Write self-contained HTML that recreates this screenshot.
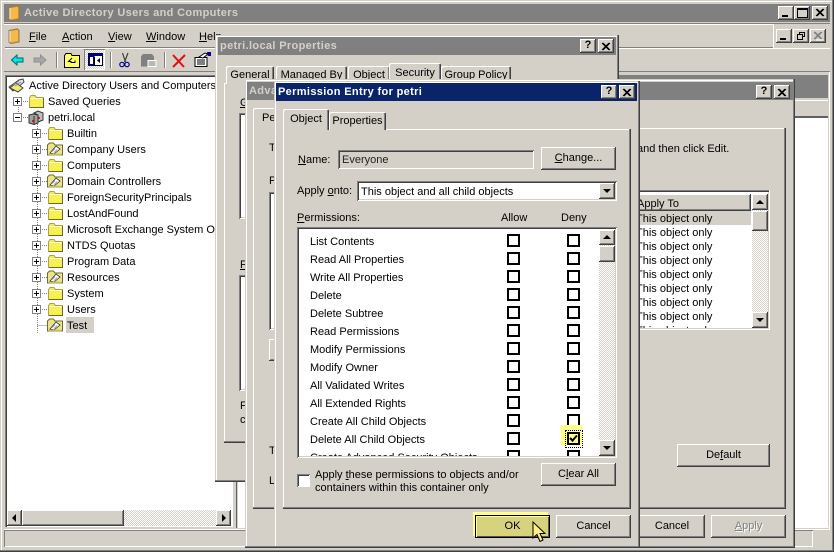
<!DOCTYPE html>
<html><head><meta charset="utf-8"><style>
html,body{margin:0;padding:0}
body{width:834px;height:552px;overflow:hidden;position:relative;background:#d4d0c8;font:11px "Liberation Sans",Arial,sans-serif;letter-spacing:0;color:#000}
div,span.t,svg{position:absolute}
.t{position:absolute;white-space:nowrap;line-height:14px;height:14px;margin-top:1px}
.b{background:#d4d0c8;box-shadow:inset -1px -1px #404040,inset 1px 1px #fff,inset -2px -2px #808080}
.s{background:#fff;box-shadow:inset 1px 1px #808080,inset -1px -1px #fff,inset 2px 2px #404040,inset -2px -2px #d4d0c8}
.w{background:#d4d0c8;box-shadow:inset -1px -1px #404040,inset -2px -2px #808080,inset 1px 1px #d4d0c8,inset 2px 2px #fff}
.p{background:#d4d0c8;box-shadow:inset -1px -1px #404040,inset -2px -2px #808080,inset 1px 1px #fff}
.tb{background:#808080;color:#d4d0c8;font-weight:bold;font-size:11px;letter-spacing:.35px;line-height:18px;white-space:nowrap;padding-left:2px;box-sizing:border-box;overflow:hidden}
.tab{background:#d4d0c8;box-shadow:inset 1px 1px #fff,inset -1px 0 #404040,inset -2px 0 #808080;border-radius:2px 2px 0 0;text-align:center;line-height:19px;white-space:nowrap}
.bt{text-align:center;white-space:nowrap}
.d{background:repeating-conic-gradient(#fff 0 25%,#d4d0c8 0 50%) 0 0/2px 2px}
.cb{width:9px;height:9px;border:2px solid #000;background:#fff}
.c{font-weight:bold;font-size:11px;line-height:13px;text-align:center;letter-spacing:0}
</style></head><body>
<svg width="0" height="0" style="left:0;top:0"><defs>
<symbol id="f" viewBox="0 0 15 13"><path d="M.5 12.500V2.500L2 .5h4l1.500 2h7v10z" fill="#f4e860" stroke="#b0a040"/><path d="M1.500 3.500h12v8h-12z" fill="#f8f050"/><path d="M1.500 3.500h12" stroke="#fffff0"/><path d="M14.500 3v10M1 12.500h13.500" stroke="#6b6a30"/></symbol>
<symbol id="o" viewBox="0 0 16 14"><path d="M.5 13V3l2-2h4l1.500 2h7.500v10z" fill="#ebe48c" stroke="#6d6a2e"/><path d="M3 11 9 4l4 3-6 5z" fill="#fff" stroke="#333" stroke-width=".8"/><path d="M5 9.500l3-3M7 10.500l3-3" stroke="#777" stroke-width=".7"/><path d="M1.500 12.500h13" stroke="#c8bf50" stroke-width="1.500"/></symbol>
<symbol id="m" viewBox="0 0 9 9"><path d="M.5.5h8v8h-8z" fill="#fff" stroke="#808080"/><path d="M2 4.500h5M4.500 2v5" stroke="#000"/></symbol>
<symbol id="n" viewBox="0 0 9 9"><path d="M.5.5h8v8h-8z" fill="#fff" stroke="#808080"/><path d="M2 4.500h5" stroke="#000"/></symbol>
<symbol id="bk" viewBox="0 0 12 16"><path d="M1 2.500 9 .8l2 1.500V14l-8 1.500-2-1.500z" fill="#e8a030" stroke="#9a7a40"/><path d="M3 3.500 10 2v11l-7 1.500z" fill="#f5b94a"/><path d="M2 3v11" stroke="#fff"/></symbol>
</defs></svg>

<!-- MAIN WINDOW -->
<div class="w" style="left:0;top:0;width:834px;height:552px"></div>
<div class="tb" style="left:4px;top:4px;width:826px;height:18px;padding-left:20px">Active Directory Users and Computers</div>
<svg style="left:8px;top:5px" width="12" height="16"><use href="#bk"/></svg>
<div class="b" style="left:778px;top:6px;width:16px;height:14px"></div><div style="left:782px;top:15px;width:6px;height:2px;background:#000"></div>
<div class="b" style="left:794px;top:6px;width:16px;height:14px"></div><div style="left:797px;top:8px;width:9px;height:7px;border:1px solid #000;border-top-width:2px"></div>
<div class="b" style="left:812px;top:6px;width:16px;height:14px"></div>
<svg style="left:815px;top:8px" width="10" height="9"><path d="M1 1l7 7M2 1l7 7M8 1 1 8M9 1 2 8" stroke="#000"/></svg>

<div style="left:4px;top:23px;width:826px;height:1px;background:#808080"></div>
<div style="left:4px;top:24px;width:769px;height:1px;background:#fff"></div>
<div style="left:5px;top:47px;width:768px;height:1px;background:#808080"></div>
<div style="left:5px;top:48px;width:825px;height:1px;background:#fff"></div>
<div style="left:773px;top:24px;width:1px;height:24px;background:#fff"></div>
<div style="left:4px;top:71px;width:826px;height:1px;background:#808080"></div>
<svg style="left:8px;top:28px" width="12" height="16"><use href="#bk"/></svg>
<span class="t" style="left:29px;top:29px"><u>F</u>ile</span>
<span class="t" style="left:62px;top:29px"><u>A</u>ction</span>
<span class="t" style="left:108px;top:29px"><u>V</u>iew</span>
<span class="t" style="left:146px;top:29px"><u>W</u>indow</span>
<span class="t" style="left:199px;top:29px"><u>H</u>elp</span>
<div class="b" style="left:776px;top:29px;width:16px;height:14px"></div><div style="left:780px;top:38px;width:6px;height:2px;background:#000"></div>
<div class="b" style="left:793px;top:29px;width:16px;height:14px"></div>
<svg style="left:796px;top:31px" width="10" height="10"><path d="M3.500 3V1.500h5v4H7M1.500 3.500h5v5h-5z" fill="none" stroke="#000"/><path d="M3 1.500h6M1 3.500h6" stroke="#000"/></svg>
<div class="b" style="left:810px;top:29px;width:16px;height:14px"></div>
<svg style="left:813px;top:31px" width="11" height="10"><path d="M1 1l7 7M2 1l7 7M8 1 1 8M9 1 2 8" stroke="#808080"/><path d="M3 9l7-0" stroke="#fff"/></svg>

<!-- toolbar -->
<svg style="left:10px;top:52px" width="230" height="18">
<path d="M1.500 8 7 3v3h6v4H7v3z" fill="#00e8e8" stroke="#006868"/>
<path d="M36 8 30.500 3v3H24v4h6.500v3z" fill="#a8a8a8" stroke="#909090"/>
<path d="M46.500 0v16" stroke="#808080"/><path d="M47.500 0v16" stroke="#fff"/>
<path d="M54.500 15.500V3.500L56 1.500h5l1 2h7.500v12z" fill="#ffff66" stroke="#000"/>
<path d="M62 6 58.500 9.500H61v1h4V8.500" fill="none" stroke="#000"/>
<path d="M100.500 0v16" stroke="#808080"/><path d="M101.500 0v16" stroke="#fff"/>
<path d="M112.500 1l3 9M118 1l-3.500 9" stroke="#333" stroke-width="1.100"/>
<circle cx="112" cy="12.500" r="2.200" fill="none" stroke="#00009a" stroke-width="1.200"/><circle cx="117" cy="12.500" r="2.200" fill="none" stroke="#00009a" stroke-width="1.200"/>
<path d="M131 4.500l2-2.500h9l2 2.500v10h-13z" fill="#808080"/><path d="M138 8.500h8v6h-8z" fill="#b8b8b8" stroke="#fff"/>
<path d="M154.500 0v16" stroke="#808080"/><path d="M155.500 0v16" stroke="#fff"/>
<path d="M163 3l11 12M175 3 163 15" stroke="#e01010" stroke-width="2"/>
<path d="M185 5.500h12v9h-12z" fill="#fff" stroke="#000"/><path d="M187 8h8M187 10h8M187 12h8" stroke="#000"/><path d="M189 5l6-4 3 1-5 4z" fill="#fff" stroke="#000"/><path d="M197 0h4v4h-3z" fill="#000080"/>
</svg>
<div class="d" style="left:84px;top:49px;width:21px;height:21px;box-shadow:inset 1px 1px #808080,inset -1px -1px #fff"></div>
<svg style="left:88px;top:53px" width="15" height="13"><path d="M.5.500h14v12H.5z" fill="#fff" stroke="#000040"/><path d="M1 1h13v2H1z" fill="#000080"/><path d="M1 3h5v9H1z" fill="#000080"/><path d="M2 4h3v7H2z" fill="#fff"/><path d="M6 3.500h1v9H6z" fill="#000"/><path d="M12 5 9 7.500 12 10z" fill="#000"/></svg>

<!-- right pane behind -->
<div style="left:237px;top:75px;width:591px;height:23px;background:#808080"></div>
<div style="left:236px;top:100px;width:592px;height:1px;background:#fff"></div>
<div style="left:236px;top:116px;width:592px;height:2px;background:#606060"></div>
<div style="left:238px;top:118px;width:590px;height:409px;background:#fff"></div>
<div style="left:236px;top:100px;width:1px;height:428px;background:#606060"></div>
<div style="left:829px;top:72px;width:1px;height:457px;background:#fff"></div>
<div style="left:238px;top:527px;width:592px;height:1px;background:#fff"></div>

<!-- tree -->
<div style="left:5px;top:75px;width:228px;height:452px;background:#fff;box-shadow:inset 1px 1px #808080,inset 2px 2px #404040,inset -1px -1px #fff"></div>
<svg style="left:8px;top:78px" width="18" height="16"><path d="M1 9 11 2l4-1 1 3-8 7-3 2z" fill="#e8e8e8" stroke="#444"/><path d="M2 10l8 4 5-4-7-5z" fill="#f0ea70" stroke="#444"/><path d="M5 7l6-4M7 8l6-4" stroke="#888"/></svg>
<span class="t" style="left:29px;top:78px">Active Directory Users and Computers</span>
<svg style="left:14px;top:94px" width="90" height="240"><path d="M4.500 3v20M9 7.500h5M9 23.500h5M23.500 28v211M28 39.500h5M28 55.500h5M28 71.500h5M28 87.500h5M28 103.500h5M28 119.500h5M28 135.500h5M28 151.500h5M28 167.500h5M28 183.500h5M28 199.500h5M28 215.500h5M23.500 231.500h10" stroke="#808080" stroke-dasharray="1 1" fill="none"/></svg>
<svg style="left:13px;top:97px" width="9" height="9"><use href="#m"/></svg>
<svg style="left:13px;top:113px" width="9" height="9"><use href="#n"/></svg>
<svg style="left:29px;top:95px" width="15" height="13"><use href="#f"/></svg>
<span class="t" style="left:48px;top:94px">Saved Queries</span>
<svg style="left:28px;top:110px" width="16" height="15"><path d="M6 3l4-2 5 2v7l-5 2V5z" fill="#c0c0c0" stroke="#333"/><path d="M1 5l4-1 5 1v8l-4 1.500L1 13z" fill="#a0a0a0" stroke="#333"/><path d="M6 6v8" stroke="#333"/><circle cx="11" cy="8" r="1" fill="#c00"/><circle cx="5" cy="11" r="1" fill="#c00"/></svg>
<span class="t" style="left:48px;top:110px">petri.local</span>

<svg style="left:32px;top:129px" width="9" height="9"><use href="#m"/></svg><svg style="left:48px;top:127px" width="15" height="13"><use href="#f"/></svg><span class="t" style="left:67px;top:126px">Builtin</span>
<svg style="left:32px;top:145px" width="9" height="9"><use href="#m"/></svg><svg style="left:47px;top:142px" width="16" height="14"><use href="#o"/></svg><span class="t" style="left:67px;top:142px">Company Users</span>
<svg style="left:32px;top:161px" width="9" height="9"><use href="#m"/></svg><svg style="left:48px;top:159px" width="15" height="13"><use href="#f"/></svg><span class="t" style="left:67px;top:158px">Computers</span>
<svg style="left:32px;top:177px" width="9" height="9"><use href="#m"/></svg><svg style="left:47px;top:174px" width="16" height="14"><use href="#o"/></svg><span class="t" style="left:67px;top:174px">Domain Controllers</span>
<svg style="left:32px;top:193px" width="9" height="9"><use href="#m"/></svg><svg style="left:48px;top:191px" width="15" height="13"><use href="#f"/></svg><span class="t" style="left:67px;top:190px">ForeignSecurityPrincipals</span>
<svg style="left:32px;top:209px" width="9" height="9"><use href="#m"/></svg><svg style="left:48px;top:207px" width="15" height="13"><use href="#f"/></svg><span class="t" style="left:67px;top:206px">LostAndFound</span>
<svg style="left:32px;top:225px" width="9" height="9"><use href="#m"/></svg><svg style="left:48px;top:223px" width="15" height="13"><use href="#f"/></svg><span class="t" style="left:67px;top:222px;width:148px;overflow:hidden">Microsoft Exchange System Objects</span>
<svg style="left:32px;top:241px" width="9" height="9"><use href="#m"/></svg><svg style="left:48px;top:239px" width="15" height="13"><use href="#f"/></svg><span class="t" style="left:67px;top:238px">NTDS Quotas</span>
<svg style="left:32px;top:257px" width="9" height="9"><use href="#m"/></svg><svg style="left:48px;top:255px" width="15" height="13"><use href="#f"/></svg><span class="t" style="left:67px;top:254px">Program Data</span>
<svg style="left:32px;top:273px" width="9" height="9"><use href="#m"/></svg><svg style="left:47px;top:270px" width="16" height="14"><use href="#o"/></svg><span class="t" style="left:67px;top:270px">Resources</span>
<svg style="left:32px;top:289px" width="9" height="9"><use href="#m"/></svg><svg style="left:48px;top:287px" width="15" height="13"><use href="#f"/></svg><span class="t" style="left:67px;top:286px">System</span>
<svg style="left:32px;top:305px" width="9" height="9"><use href="#m"/></svg><svg style="left:48px;top:303px" width="15" height="13"><use href="#f"/></svg><span class="t" style="left:67px;top:302px">Users</span>
<div style="left:66px;top:317px;width:28px;height:16px;background:#d4d0c8"></div>
<svg style="left:47px;top:318px" width="16" height="14"><use href="#o"/></svg><span class="t" style="left:67px;top:318px">Test</span>
<!-- tree scrollbar -->
<div class="d" style="left:7px;top:510px;width:224px;height:16px"></div>
<div class="b" style="left:7px;top:510px;width:15px;height:16px"></div><svg style="left:11px;top:514px" width="6" height="8"><path d="M5 0v8L1 4z"/></svg>
<div class="b" style="left:22px;top:510px;width:102px;height:16px"></div>
<div class="b" style="left:216px;top:510px;width:15px;height:16px"></div><svg style="left:221px;top:514px" width="6" height="8"><path d="M1 0v8l4-4z"/></svg>
<!-- status -->
<div style="left:4px;top:530px;width:809px;height:17px;box-shadow:inset 1px 1px #808080,inset -1px -1px #fff"></div>
<div style="left:4px;top:529px;width:826px;height:1px;background:#fff"></div>

<!-- DIALOG 1 -->
<div class="w" style="left:215px;top:35px;width:404px;height:447px"></div>
<div class="tb" style="left:218px;top:37px;width:398px;height:18px">petri.local Properties</div>
<div class="b" style="left:580px;top:39px;width:16px;height:14px"></div><div class="c" style="left:580px;top:39px;width:16px;height:14px">?</div>
<div class="b" style="left:598px;top:39px;width:16px;height:14px"></div><svg style="left:601px;top:42px" width="10" height="9"><path d="M1 1l7 7M2 1l7 7M8 1 1 8M9 1 2 8" stroke="#000"/></svg>
<div class="p" style="left:224px;top:83px;width:386px;height:360px"></div>
<div class="tab" style="left:226px;top:66px;width:48px;height:18px">General</div>
<div class="tab" style="left:276px;top:66px;width:71px;height:18px">Managed By</div>
<div class="tab" style="left:348px;top:66px;width:42px;height:18px">Object</div>
<div class="tab" style="left:389px;top:63px;width:52px;height:21px;line-height:21px">Security</div>
<div class="tab" style="left:441px;top:66px;width:70px;height:18px">Group Policy</div>
<span class="t" style="left:240px;top:95px"><u>G</u></span>
<div class="s" style="left:239px;top:113px;width:60px;height:106px"></div>
<span class="t" style="left:240px;top:257px"><u>F</u></span>
<div class="s" style="left:239px;top:275px;width:60px;height:116px"></div>
<span class="t" style="left:240px;top:398px">F</span>
<span class="t" style="left:240px;top:412px">c</span>

<!-- DIALOG 2 -->
<div class="w" style="left:245px;top:79px;width:550px;height:469px"></div>
<div class="tb" style="left:247px;top:82px;width:546px;height:18px">Advanced Security Settings for petri</div>
<div class="b" style="left:756px;top:85px;width:16px;height:14px"></div><div class="c" style="left:756px;top:85px;width:16px;height:14px">?</div>
<div class="b" style="left:774px;top:85px;width:16px;height:14px"></div><svg style="left:777px;top:88px" width="10" height="9"><path d="M1 1l7 7M2 1l7 7M8 1 1 8M9 1 2 8" stroke="#000"/></svg>
<div class="p" style="left:253px;top:128px;width:533px;height:381px"></div>
<div class="tab" style="left:253px;top:108px;width:60px;height:21px;line-height:21px;text-align:left;text-indent:9px">Permissions</div>
<span class="t" style="left:269px;top:140px">T</span>
<span class="t" style="left:269px;top:173px">F</span>
<div class="s" style="left:269px;top:192px;width:60px;height:138px"></div>
<div class="b" style="left:269px;top:339px;width:60px;height:22px"></div>
<span class="t" style="left:269px;top:443px">T</span>
<span class="t" style="left:269px;top:473px">L</span>
<span class="t" style="left:637px;top:141px">and then click Edit.</span>
<!-- adv list -->
<div style="left:630px;top:190px;width:140px;height:140px;background:#fff;box-shadow:inset -1px -1px #fff,inset 1px 1px #808080,inset 2px 2px #404040,inset -2px -2px #d4d0c8"></div>
<div class="b" style="left:630px;top:194px;width:121px;height:17px"></div>
<span class="t" style="left:637px;top:196px">Apply To</span>
<div style="left:630px;top:211px;width:121px;height:14px;background:#d4d0c8"></div>
<div style="left:630px;top:211px;width:121px;height:117px;overflow:hidden">
<span class="t" style="left:6px;top:0">This object only</span>
<span class="t" style="left:6px;top:14px">This object only</span>
<span class="t" style="left:6px;top:28px">This object only</span>
<span class="t" style="left:6px;top:42px">This object only</span>
<span class="t" style="left:6px;top:56px">This object only</span>
<span class="t" style="left:6px;top:70px">This object only</span>
<span class="t" style="left:6px;top:84px">This object only</span>
<span class="t" style="left:6px;top:98px">This object only</span>
<span class="t" style="left:6px;top:112px">This object only</span>
</div>
<div class="d" style="left:752px;top:194px;width:16px;height:134px"></div>
<div class="b" style="left:752px;top:194px;width:16px;height:16px"></div><svg style="left:756px;top:200px" width="8" height="5"><path d="M4 0 8 4H0z"/></svg>
<div class="b" style="left:752px;top:211px;width:16px;height:20px"></div>
<div class="b" style="left:752px;top:312px;width:16px;height:16px"></div><svg style="left:756px;top:318px" width="8" height="5"><path d="M0 0h8L4 4z"/></svg>
<div class="b bt" style="left:677px;top:444px;width:93px;height:23px;line-height:22px">De<u>f</u>ault</div>
<div class="b bt" style="left:639px;top:515px;width:66px;height:23px;line-height:22px">Cancel</div>
<div class="b bt" style="left:711px;top:515px;width:75px;height:23px;line-height:22px;color:#808080;text-shadow:1px 1px #fff"><u>A</u>pply</div>

<!-- DIALOG 3 -->
<div class="w" style="left:274px;top:81px;width:366px;height:467px"></div>
<div class="tb" style="left:276px;top:83px;width:361px;height:18px;background:#0a246a;color:#fff">Permission Entry for petri</div>
<div class="b" style="left:601px;top:85px;width:16px;height:14px"></div><div class="c" style="left:601px;top:85px;width:16px;height:14px">?</div>
<div class="b" style="left:619px;top:85px;width:16px;height:14px"></div><svg style="left:622px;top:88px" width="10" height="9"><path d="M1 1l7 7M2 1l7 7M8 1 1 8M9 1 2 8" stroke="#000"/></svg>
<div class="p" style="left:283px;top:129px;width:348px;height:380px"></div>
<div class="tab" style="left:329px;top:112px;width:57px;height:18px;line-height:19px">Properties</div>
<div class="tab" style="left:283px;top:109px;width:46px;height:21px;line-height:21px">Object</div>

<span class="t" style="left:298px;top:152px"><u>N</u>ame:</span>
<div style="left:338px;top:150px;width:196px;height:19px;background:#d4d0c8;box-shadow:inset 1px 1px #808080,inset -1px -1px #fff,inset 2px 2px #404040"></div>
<span class="t" style="left:342px;top:152px;color:#222">Everyone</span>
<div class="b bt" style="left:541px;top:147px;width:75px;height:23px;line-height:22px"><u>C</u>hange...</div>

<span class="t" style="left:297px;top:183px">Apply <u>o</u>nto:</span>
<div class="s" style="left:357px;top:181px;width:260px;height:20px"></div>
<span class="t" style="left:361px;top:184px">This object and all child objects</span>
<div class="b" style="left:599px;top:183px;width:16px;height:16px"></div><svg style="left:603px;top:189px" width="8" height="5"><path d="M0 0h8L4 4z"/></svg>

<span class="t" style="left:297px;top:210px"><u>P</u>ermissions:</span>
<span class="t" style="left:501px;top:210px">Allow</span>
<span class="t" style="left:561px;top:210px">Deny</span>

<div class="s" style="left:297px;top:227px;width:320px;height:231px"></div>
<div style="left:299px;top:229px;width:300px;height:227px;overflow:hidden;background:#fff">
<span class="t" style="left:11px;top:5px">List Contents</span>
<span class="t" style="left:11px;top:23px">Read All Properties</span>
<span class="t" style="left:11px;top:41px">Write All Properties</span>
<span class="t" style="left:11px;top:59px">Delete</span>
<span class="t" style="left:11px;top:77px">Delete Subtree</span>
<span class="t" style="left:11px;top:95px">Read Permissions</span>
<span class="t" style="left:11px;top:113px">Modify Permissions</span>
<span class="t" style="left:11px;top:131px">Modify Owner</span>
<span class="t" style="left:11px;top:149px">All Validated Writes</span>
<span class="t" style="left:11px;top:167px">All Extended Rights</span>
<span class="t" style="left:11px;top:185px">Create All Child Objects</span>
<span class="t" style="left:11px;top:203px">Delete All Child Objects</span>
<span class="t" style="left:11px;top:221px">Create Advanced Security Objects</span>
<div class="cb" style="left:208px;top:5px"></div><div class="cb" style="left:268px;top:5px"></div>
<div class="cb" style="left:208px;top:23px"></div><div class="cb" style="left:268px;top:23px"></div>
<div class="cb" style="left:208px;top:41px"></div><div class="cb" style="left:268px;top:41px"></div>
<div class="cb" style="left:208px;top:59px"></div><div class="cb" style="left:268px;top:59px"></div>
<div class="cb" style="left:208px;top:77px"></div><div class="cb" style="left:268px;top:77px"></div>
<div class="cb" style="left:208px;top:95px"></div><div class="cb" style="left:268px;top:95px"></div>
<div class="cb" style="left:208px;top:113px"></div><div class="cb" style="left:268px;top:113px"></div>
<div class="cb" style="left:208px;top:131px"></div><div class="cb" style="left:268px;top:131px"></div>
<div class="cb" style="left:208px;top:149px"></div><div class="cb" style="left:268px;top:149px"></div>
<div class="cb" style="left:208px;top:167px"></div><div class="cb" style="left:268px;top:167px"></div>
<div class="cb" style="left:208px;top:185px"></div><div class="cb" style="left:268px;top:185px"></div>
<div class="cb" style="left:208px;top:203px"></div>
<div style="left:262px;top:196px;width:21px;height:20px;background:#ffff80"></div>
<div style="left:266px;top:201px;width:16px;height:16px;border:1px dotted #000"></div>
<div class="cb" style="left:268px;top:203px;background:#ffff90"></div>
<svg style="left:270px;top:205px" width="9" height="9"><path d="M1 4l2.500 2.500L8 1.500" fill="none" stroke="#000" stroke-width="2"/></svg>
<div class="cb" style="left:208px;top:221px"></div><div class="cb" style="left:268px;top:221px"></div>
</div>
<div class="d" style="left:599px;top:230px;width:16px;height:226px"></div>
<div class="b" style="left:599px;top:230px;width:16px;height:15px"></div><svg style="left:603px;top:235px" width="8" height="5"><path d="M4 0 8 4H0z"/></svg>
<div class="b" style="left:599px;top:246px;width:16px;height:16px"></div>
<div class="b" style="left:599px;top:440px;width:16px;height:16px"></div><svg style="left:603px;top:446px" width="8" height="5"><path d="M0 0h8L4 4z"/></svg>

<div style="left:297px;top:474px;width:13px;height:13px;background:#d4d0c8;box-shadow:inset 1px 1px #808080,inset -1px -1px #fff,inset 2px 2px #404040"></div>
<div style="left:299px;top:476px;width:10px;height:10px;background:#fff"></div>
<span class="t" style="left:315px;top:467px">Apply <u>t</u>hese permissions to objects and/or</span>
<span class="t" style="left:315px;top:480px">containers within this container only</span>
<div class="b bt" style="left:541px;top:463px;width:75px;height:23px;line-height:22px">C<u>l</u>ear All</div>

<div style="left:473px;top:512px;width:75px;height:24px;background:#ffff90"></div>
<div class="bt" style="left:475px;top:515px;width:75px;height:23px;line-height:22px;background:#d6d27e;box-shadow:inset 0 0 0 1px #000,inset 2px 2px #fffcc0,inset -2px -2px #555">OK</div>
<svg style="left:532px;top:521px" width="14" height="23"><path d="M1 1v16l4-3.500 3 7 3-1.500-3-6.500h5z" fill="#ffee88" stroke="#000"/></svg>
<div class="b bt" style="left:556px;top:515px;width:75px;height:23px;line-height:22px">Cancel</div>
</body></html>
